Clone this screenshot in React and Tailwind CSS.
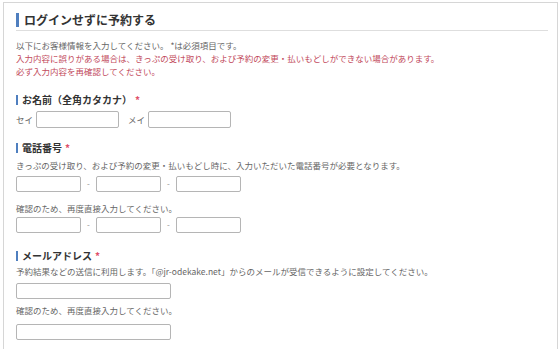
import React from "react";

const font = { fontFamily: '"Noto Sans CJK JP", "Noto Sans", sans-serif' };

function Star() {
  return <span className="ml-[3px] text-[#e0506a]">*</span>;
}

function Heading({ children, className = "" }) {
  return (
    <div className={`flex items-center h-[14px] ${className}`}>
      <span className="w-[2px] h-[10px] bg-[#4f7fbf] mr-[4px]" />
      <span className="text-[10px] font-bold text-[#333] leading-[14px]">
        {children}
        <Star />
      </span>
    </div>
  );
}

function Note({ children, className = "" }) {
  return (
    <p className={`text-[8.5px] leading-[13px] text-[#666] ${className}`}>
      {children}
    </p>
  );
}

function Box({ className = "" }) {
  return (
    <input
      type="text"
      className={`border border-[#b5b5b5] rounded-[2px] bg-white outline-none ${className}`}
    />
  );
}

function Dash() {
  return (
    <span className="w-[15px] text-center text-[8px] text-[#888] leading-none">
      -
    </span>
  );
}

function PhoneRow({ className = "" }) {
  return (
    <div className={`flex items-center ${className}`}>
      <Box className="w-[65px] h-[16px]" />
      <Dash />
      <Box className="w-[65px] h-[16px]" />
      <Dash />
      <Box className="w-[65px] h-[16px]" />
    </div>
  );
}

export default function App() {
  return (
    <div className="w-[560px] h-[349px] bg-white overflow-hidden pt-[2px] pl-[3px]" style={font}>
      <div className="w-[555px] h-[360px] border border-[#d6d6d6] pl-[12px] pr-[9px]">
        {/* title */}
        <div className="flex items-center pt-[10px] pb-[3px] border-b border-[#dedede]">
          <span className="w-[3px] h-[14px] bg-[#4f7fbf] mr-[5px]" />
          <h1 className="text-[12px] font-bold text-[#333] leading-[14px]">
            ログインせずに予約する
          </h1>
        </div>

        <div className="mt-[8px]">
          <Note>以下にお客様情報を入力してください。 *は必須項目です。</Note>
          <p className="text-[8.5px] leading-[13px] text-[#c24a5c]">
            入力内容に誤りがある場合は、きっぷの受け取り、および予約の変更・払いもどしができない場合があります。
          </p>
          <p className="text-[8.5px] leading-[13px] text-[#c24a5c]">
            必ず入力内容を再確認してください。
          </p>
        </div>

        {/* name */}
        <Heading className="mt-[15px]">お名前（全角カタカナ）</Heading>
        <div className="flex items-center mt-[4px]">
          <span className="text-[8.5px] text-[#666] w-[20px]">セイ</span>
          <Box className="w-[83px] h-[17px]" />
          <span className="text-[8.5px] text-[#666] ml-[9px] w-[20px]">メイ</span>
          <Box className="w-[83px] h-[17px]" />
        </div>

        {/* phone */}
        <Heading className="mt-[13px]">電話番号</Heading>
        <Note className="mt-[4px]">
          きっぷの受け取り、および予約の変更・払いもどし時に、入力いただいた電話番号が必要となります。
        </Note>
        <PhoneRow className="mt-[4px]" />
        <Note className="mt-[10px]">確認のため、再度直接入力してください。</Note>
        <PhoneRow className="mt-[2px]" />

        {/* mail */}
        <Heading className="mt-[16px]">メールアドレス</Heading>
        <Note className="mt-[2px]">
          予約結果などの送信に利用します。「@jr-odekake.net」からのメールが受信できるように設定してください。
        </Note>
        <Box className="block w-[155px] h-[16px] mt-[5px]" />
        <Note className="mt-[5px]">確認のため、再度直接入力してください。</Note>
        <Box className="block w-[155px] h-[16px] mt-[7px]" />
      </div>
    </div>
  );
}
